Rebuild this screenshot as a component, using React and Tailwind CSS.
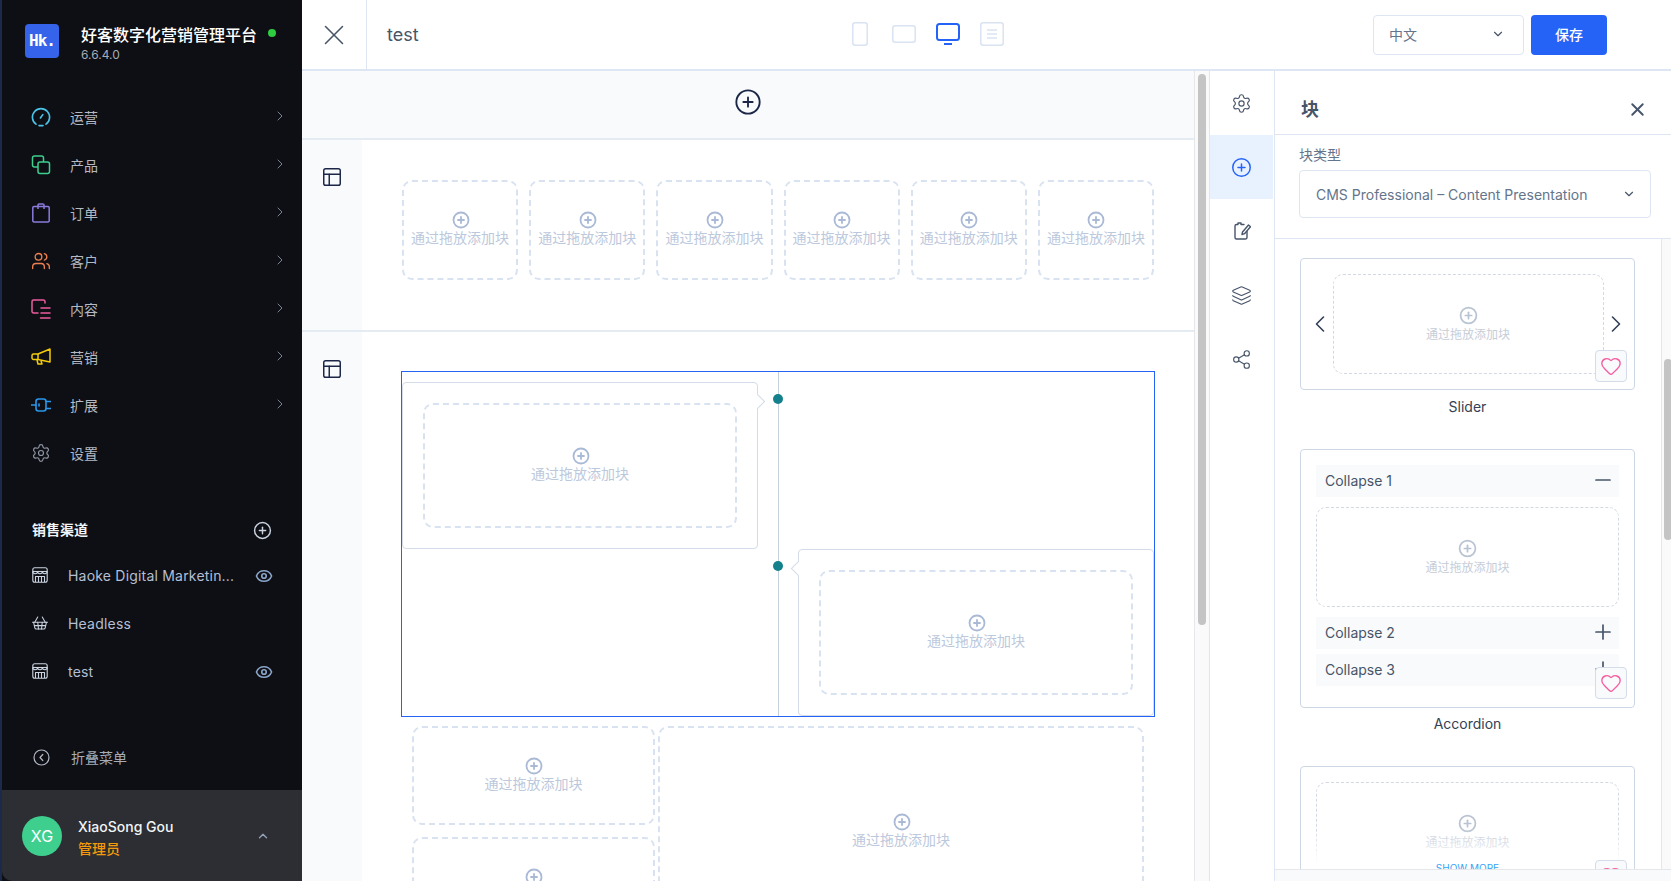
import {
  ChevronDown,
  ChevronLeft,
  ChevronRight,
  ChevronUp,
  CirclePlus,
  Eye,
  Heart,
  Layers,
  Minus,
  PanelsTopLeft,
  Plus,
  Settings,
  Share2,
  ShoppingBasket,
  Users,
  X,
} from "lucide-react";

const font = "font-['Inter','Noto_Sans_CJK_SC',sans-serif]";

const GaugeIcon = () => (
  <svg width="20" height="20" viewBox="0 0 20 20" fill="none" stroke="#4cc3e6" strokeWidth="1.6" strokeLinecap="round">
    <path d="M5 17.2A8.6 8.6 0 1 1 15 17.2" />
    <path d="M8 18.6h4" />
    <path d="M9.4 11l2.4-3.4" />
  </svg>
);

const CopyIcon = () => (
  <svg width="20" height="20" viewBox="0 0 20 20" fill="none" stroke="#3ecf8e" strokeWidth="1.5">
    <rect x="1.5" y="1" width="11" height="11" rx="2" />
    <rect x="7" y="7" width="11.5" height="11.5" rx="2" fill="#0d0f14" />
  </svg>
);

const BagIcon = () => (
  <svg width="20" height="20" viewBox="0 0 20 20" fill="none" stroke="#8b7bdc" strokeWidth="1.5" strokeLinejoin="round">
    <path d="M3 3.5h3.5M13.5 3.5H17a1.2 1.2 0 0 1 1.2 1.2v13A1.2 1.2 0 0 1 17 19H3a1.2 1.2 0 0 1-1.2-1.3v-13A1.2 1.2 0 0 1 3 3.5z" />
    <path d="M7 6V2a1 1 0 0 1 1-1h4a1 1 0 0 1 1 1v4" />
  </svg>
);

const ContentIcon = () => (
  <svg width="20" height="20" viewBox="0 0 20 20" fill="none" stroke="#ec5c9e" strokeWidth="1.5" strokeLinecap="round">
    <path d="M14 4V2.5A1.5 1.5 0 0 0 12.5 1h-10A1.5 1.5 0 0 0 1 2.5v10A1.5 1.5 0 0 0 2.5 14H7" />
    <path d="M10 9h9M10 14h9M9.500 19h9.500" />
  </svg>
);

const HornIcon = () => (
  <svg width="20" height="20" viewBox="0 0 20 20" fill="none" stroke="#f5cc0a" strokeWidth="1.5" strokeLinejoin="round">
    <path d="M19 2v13L7 12.500H2.500A1.500 1.500 0 0 1 1 11V8.500A1.500 1.500 0 0 1 2.500 7H7z" />
    <path d="M7 7v5.500M6 13l1 4h4l-1-3.200" />
  </svg>
);

const PlugIcon = () => (
  <svg width="20" height="20" viewBox="0 0 20 20" fill="none" stroke="#2b97ea" strokeWidth="1.6" strokeLinecap="round">
    <rect x="5" y="4" width="10" height="12" rx="2.500" />
    <path d="M0.500 10H5M15 6.500h4.500M15 13.500h4.500" />
    <path d="M8 9v2" />
  </svg>
);

const StoreIcon = () => (
  <svg width="16" height="16" viewBox="0 0 16 16" fill="none" stroke="currentColor" strokeWidth="1.100" strokeLinejoin="round">
    <rect x="0.800" y="0.800" width="14.400" height="14.400" rx="2" />
    <path d="M0.800 4.500h14.400" />
    <path d="M0.800 4.500c0 1.300 1 2.200 2.400 2.200s2.400-.9 2.400-2.200c0 1.300 1 2.200 2.400 2.200s2.400-.9 2.400-2.200c0 1.300 1 2.200 2.400 2.200s2.400-.9 2.400-2.200" />
    <path d="M3.500 15V9.500h9V15M6.500 9.500V15M9.500 9.500V15" />
  </svg>
);

const menus = [
  { label: "运营", icon: <GaugeIcon /> },
  { label: "产品", icon: <CopyIcon /> },
  { label: "订单", icon: <BagIcon /> },
  { label: "客户", icon: <Users size={20} strokeWidth={1.6} color="#ee7f4f" /> },
  { label: "内容", icon: <ContentIcon /> },
  { label: "营销", icon: <HornIcon /> },
  { label: "扩展", icon: <PlugIcon /> },
  { label: "设置", icon: <Settings size={20} strokeWidth={1.4} color="#8f96a3" />, noArrow: true },
];

const channels = [
  { label: "Haoke Digital Marketin...", icon: <StoreIcon />, eye: true },
  { label: "Headless", icon: <ShoppingBasket size={18} strokeWidth={1.4} className="-ml-[1px]" /> },
  { label: "test", icon: <StoreIcon />, eye: true },
];

const Sidebar = () => (
  <aside className="flex h-full w-[302px] shrink-0 flex-col border-l-2 border-[#1c2a4a] bg-[#0d0f14]">
    <div className="flex h-[90px] shrink-0 items-start pl-[23px] pt-[24px]">
      <div className="flex h-[34px] w-[34px] items-center justify-center rounded-[4px] bg-[#3563e9] font-['DejaVu_Sans_Mono',monospace] text-[16px] font-bold tracking-[-1px] text-white">
        Hk.
      </div>
      <div className="ml-[22px]">
        <div className="flex items-start">
          <span className="text-[16px] leading-[22px] font-medium text-white">好客数字化营销管理平台</span>
          <span className="ml-[11px] mt-[5px] h-2 w-2 rounded-full bg-[#2ecc40]" />
        </div>
        <div className="mt-[1px] text-[12px] leading-[16px] text-[#a5acb8]">6.6.4.0</div>
      </div>
    </div>
    <nav className="shrink-0 pt-[3px]">
      {menus.map((m) => (
        <div key={m.label} className="flex h-[48px] items-center pl-[29px] pr-[14px]">
          <span className="flex w-[39px] items-center">{m.icon}</span>
          <span className="flex-1 text-[14px] text-[#b4b9c4]">{m.label}</span>
          {!m.noArrow && <ChevronRight size={16} strokeWidth={1.300} color="#8f96a3" className="-mt-[3px]" />}
        </div>
      ))}
    </nav>
    <div className="mt-[38px] flex h-[28px] shrink-0 items-center justify-between pl-[30px] pr-[30px]">
      <span className="text-[14px] font-semibold text-[#f1f5f9]">销售渠道</span>
      <CirclePlus size={19} strokeWidth={1.800} color="#cbd5e1" className="mt-[2px]" />
    </div>
    <div className="mt-[8px] shrink-0">
      {channels.map((c) => (
        <div key={c.label} className="flex h-[48px] items-center pl-[30px] pr-[29px] text-[#cbd5e1]">
          <span className="flex w-[36px]">{c.icon}</span>
          <span className="flex-1 text-[14px] tracking-[0.2px] text-[#b4bfd3]">{c.label}</span>
          {c.eye && <Eye size={18} strokeWidth={2.200} color="#8aa3c7" className="mt-[1px]" />}
        </div>
      ))}
    </div>
    <div className="mt-[38px] flex h-[48px] shrink-0 items-center pl-[31px]">
      <svg width="17" height="17" viewBox="0 0 17 17" fill="none" stroke="#b4bac6" strokeWidth="1.200" strokeLinecap="round" strokeLinejoin="round">
        <circle cx="8.500" cy="8.500" r="7.500" />
        <path d="M9.800 5.500L7 8.500l2.800 3" />
      </svg>
      <span className="ml-[21px] text-[14px] text-[#a5acb8]">折叠菜单</span>
    </div>
    <div className="mt-auto flex h-[91px] shrink-0 items-center rounded-bl-[10px] bg-[#2d2e33] pl-[20px] pr-[32px]">
      <div className="flex h-10 w-10 items-center justify-center rounded-full bg-[#3ecf8e] text-[16px] text-white">XG</div>
      <div className="ml-[16px] flex-1 pt-[4px]">
        <div className="text-[14px] leading-[22px] font-medium text-[#f1f5f9]">XiaoSong Gou</div>
        <div className="text-[14px] leading-[22px] font-medium text-[#f59a0c]">管理员</div>
      </div>
      <ChevronUp size={14} strokeWidth={2.200} color="#94a3b8" />
    </div>
  </aside>
);

const Phone = () => (
  <svg width="16" height="24" viewBox="0 0 16 24" fill="none" stroke="#d9e3f2" strokeWidth="1.500">
    <rect x="0.750" y="0.750" width="14.500" height="22.500" rx="2.500" />
  </svg>
);

const Tablet = () => (
  <svg width="24" height="18" viewBox="0 0 24 18" fill="none" stroke="#d9e3f2" strokeWidth="1.500">
    <rect x="0.750" y="0.750" width="22.500" height="16.500" rx="2.500" />
  </svg>
);

const Desktop = () => (
  <svg width="24" height="22" viewBox="0 0 24 22" fill="none" stroke="#2463f6" strokeWidth="2">
    <rect x="1" y="1" width="22" height="16" rx="2.500" />
    <path d="M8 21h8" />
  </svg>
);

const ListDoc = () => (
  <svg width="24" height="24" viewBox="0 0 24 24" fill="none" stroke="#d9e3f2" strokeWidth="1.500">
    <rect x="0.750" y="0.750" width="22.500" height="22.500" rx="2.500" />
    <path d="M7 8h10M7 12h10M7 16h10" />
  </svg>
);

const Header = () => (
  <header className="flex h-[71px] shrink-0 items-center border-b-2 border-[#dde6f2] bg-white">
    <div className="flex h-full w-[65px] shrink-0 items-center justify-center border-r border-[#dde6f2]">
      <X size={34} strokeWidth={1.100} color="#475569" />
    </div>
    <div className="w-[481px] shrink-0 pl-[20px] text-[18px] text-[#475569]">test</div>
    <div className="-mt-[1px] flex w-[156px] shrink-0 items-center gap-[20px]">
      <span className="flex w-[24px] justify-center"><Phone /></span>
      <span className="flex w-[24px] justify-center"><Tablet /></span>
      <span className="flex w-[24px] justify-center"><Desktop /></span>
      <span className="flex w-[24px] justify-center"><ListDoc /></span>
    </div>
    <div className="ml-[369px] flex h-[40px] w-[151px] shrink-0 items-center justify-between rounded-[4px] border border-[#dde6f2] pb-[1px] pl-[15px] pr-[18px] text-[14px] text-[#64748b]">
      中文
      <ChevronDown size={14} strokeWidth={2} color="#475569" />
    </div>
    <button className="ml-[7px] h-[40px] w-[76px] shrink-0 rounded-[4px] bg-[#2463f6] pb-[1px] text-[14px] font-medium text-white">保存</button>
  </header>
);

const Slot = ({ className = "" }) => (
  <div className={`flex flex-col items-center justify-center rounded-[10px] border-2 border-dashed border-[#d8e2f0] ${className}`}>
    <CirclePlus size={18} strokeWidth={2.400} color="#a9b9d6" className="-my-[1px] ml-[1px]" />
    <span className="text-[14px] leading-[20px] whitespace-nowrap text-[#bcc8dc]">通过拖放添加块</span>
  </div>
);

const Bubble = ({ side, className = "" }) => (
  <div className={`relative flex rounded-[4px] border border-[#d3dce8] bg-white ${className}`}>
    <span
      className={
        side === "left"
          ? "absolute right-[-6px] top-[13px] h-[11px] w-[11px] rotate-45 border-r border-t border-[#d3dce8] bg-white"
          : "absolute left-[-6px] top-[13px] h-[11px] w-[11px] rotate-45 border-b border-l border-[#d3dce8] bg-white"
      }
    />
    <Slot className="m-[20px] flex-1" />
  </div>
);

const Canvas = () => (
  <div className="flex h-full w-[892px] shrink-0 flex-col overflow-hidden bg-white">
    <div className="flex h-[69px] shrink-0 items-center justify-center border-b-2 border-[#e5ebf3] bg-[#f8fafc] pb-[5px]">
      <CirclePlus size={28} strokeWidth={1.600} color="#1c2747" />
    </div>
    <div className="flex h-[192px] shrink-0 border-b-2 border-[#e5ebf3]">
      <div className="flex w-[60px] shrink-0 justify-center bg-[#f8fafc] pt-[26px]">
        <PanelsTopLeft size={22} strokeWidth={1.600} color="#1c2747" />
      </div>
      <div className="flex flex-1 items-start gap-[11px] px-[40px] pt-[40px]">
        {[1, 2, 3, 4, 5, 6].map((i) => (
          <Slot key={i} className="h-[100px] flex-1" />
        ))}
      </div>
    </div>
    <div className="flex min-h-0 flex-1">
      <div className="flex w-[60px] shrink-0 justify-center bg-[#f8fafc] pt-[26px]">
        <PanelsTopLeft size={22} strokeWidth={1.600} color="#1c2747" />
      </div>
      <div className="flex-1 pl-[39px] pt-[39px]">
        <div className="relative grid h-[346px] w-[754px] grid-cols-[376px_1px_1fr] border border-[#2463f6]">
          <div className="pt-[10px]">
            <Bubble side="left" className="h-[167px] w-[356px]" />
          </div>
          <div className="bg-[#c4d0dc]" />
          <div className="pl-[19px] pt-[177px]">
            <Bubble side="right" className="h-[167px]" />
          </div>
          <span className="absolute left-[371px] top-[22px] h-[10px] w-[10px] rounded-full bg-[#14808c]" />
          <span className="absolute left-[371px] top-[189px] h-[10px] w-[10px] rounded-full bg-[#14808c]" />
        </div>
        <div className="flex gap-[3px] pl-[11px] pt-[9px]">
          <div className="flex w-[243px] shrink-0 flex-col gap-[12px]">
            <Slot className="h-[99px]" />
            <Slot className="h-[99px]" />
          </div>
          <Slot className="h-[211px] w-[486px]" />
        </div>
      </div>
    </div>
  </div>
);

const Rail = () => (
  <div className="flex h-full w-[66px] shrink-0 flex-col border-x border-[#dde6f2] bg-white pr-[1px] text-[#475569]">
    <div className="flex h-[64px] items-center justify-center">
      <Settings size={21} strokeWidth={1.300} />
    </div>
    <div className="flex h-[64px] items-center justify-center bg-[#e8f2ff]">
      <CirclePlus size={21} strokeWidth={1.700} color="#2463f6" />
    </div>
    <div className="flex h-[64px] items-center justify-center">
      <svg width="18" height="18" viewBox="0 0 18 18" fill="none" stroke="currentColor" strokeWidth="1.400" strokeLinecap="round" strokeLinejoin="round">
        <path d="M14 9.500V15.500A1.500 1.500 0 0 1 12.500 17h-9A1.500 1.500 0 0 1 2 15.500V4A1.500 1.500 0 0 1 3.500 2.500H5V1h3v1.500h3" />
        <path d="M9 12.500l.5-2.500 6-7 2 1.700-6 7z" />
      </svg>
    </div>
    <div className="flex h-[64px] items-center justify-center">
      <Layers size={21} strokeWidth={1.300} />
    </div>
    <div className="flex h-[64px] items-center justify-center">
      <Share2 size={21} strokeWidth={1.300} />
    </div>
  </div>
);

const HeartBtn = ({ className = "" }) => (
  <div className={`absolute right-[7px] flex h-[32px] w-[32px] items-center justify-center rounded-[4px] border border-[#d3dce8] bg-[#f8fafc] ${className}`}>
    <Heart size={22} strokeWidth={1.500} color="#f45fa0" />
  </div>
);

const PanelSlot = ({ className = "" }) => (
  <div className={`flex flex-col items-center justify-center rounded-[10px] border border-dashed border-[#d3d9e2] bg-white pt-[2px] ${className}`}>
    <CirclePlus size={19} strokeWidth={2.200} color="#b9c3d2" />
    <span className="text-[12px] leading-[20px] whitespace-nowrap text-[#c6cdd8]">通过拖放添加块</span>
  </div>
);

const Row = ({ label, icon, className = "" }) => (
  <div className={`flex h-[32px] items-center justify-between bg-[#f9fafb] pb-[1px] pl-[9px] pr-[4px] text-[14px] text-[#475569] ${className}`}>
    {label}
    {icon}
  </div>
);

const Panel = () => (
  <div className="flex h-full min-w-0 flex-1 flex-col bg-white">
    <div className="flex h-[64px] shrink-0 items-center justify-between border-b border-[#dde6f2] pl-[26px] pr-[23px] pt-[13px]">
      <span className="text-[18px] font-semibold text-[#475569]">块</span>
      <X size={21} strokeWidth={2.200} color="#475569" />
    </div>
    <div className="h-[104px] shrink-0 border-b border-[#dde6f2] pl-[24px] pr-[20px] pt-[9px]">
      <div className="text-[14px] leading-[22px] text-[#64748b]">块类型</div>
      <div className="mt-[4px] flex h-[48px] items-center justify-between rounded-[4px] border border-[#dde6f2] pl-[16px] pr-[14px] text-[14px] text-[#64748b]">
        CMS Professional – Content Presentation
        <ChevronDown size={14} strokeWidth={2} color="#475569" />
      </div>
    </div>
    <div className="flex min-h-0 flex-1">
      <div className="min-w-0 flex-1 overflow-hidden pl-[25px] pr-[26px] pt-[19px]">
        <div className="relative flex h-[132px] items-center justify-center rounded-[4px] border border-[#cdd8e4]">
          <ChevronLeft size={28} strokeWidth={1.400} color="#334155" className="mr-[-1px]" />
          <PanelSlot className="h-[100px] w-[271px]" />
          <ChevronRight size={28} strokeWidth={1.400} color="#334155" className="ml-[-2px]" />
          <HeartBtn className="top-[91px]" />
        </div>
        <div className="pt-[6px] text-center text-[14px] leading-[22px] text-[#334155]">Slider</div>
        <div className="relative mt-[31px] h-[259px] rounded-[4px] border border-[#cdd8e4] px-[15px] pt-[15px]">
          <Row label="Collapse 1" icon={<Minus size={24} strokeWidth={1.700} className="-mt-[2px]" />} />
          <PanelSlot className="mt-[10px] h-[100px]" />
          <Row label="Collapse 2" icon={<Plus size={24} strokeWidth={1.700} className="-mt-[2px]" />} className="mt-[10px]" />
          <Row label="Collapse 3" icon={<Plus size={24} strokeWidth={1.700} className="-mt-[2px]" />} className="mt-[5px]" />
          <HeartBtn className="top-[217px]" />
        </div>
        <div className="pt-[5px] text-center text-[14px] leading-[22px] text-[#334155]">Accordion</div>
        <div className="relative mt-[31px] h-[200px] rounded-[4px] border border-[#cdd8e4] px-[15px] pt-[15px]">
          <PanelSlot className="h-[100px]" />
          <div className="absolute inset-x-0 top-[60px] h-[38px] bg-gradient-to-b from-transparent to-white" />
          <div className="absolute inset-x-0 top-[98px] h-[40px] bg-white" />
          <div className="absolute inset-x-0 top-[93px] text-center text-[10px] leading-[16px] text-[#38a3f5]">SHOW MORE</div>
          <HeartBtn className="top-[93px]" />
        </div>
      </div>
      <div className="h-full w-[10px] shrink-0 border-l border-[#e5e7eb] bg-[#fafafa] pl-[2px] pt-[120px]">
        <div className="h-[181px] w-[8px] rounded-[4px] bg-[#c4c4c4]" />
      </div>
    </div>
    <div className="h-[12px] shrink-0 border-t border-[#e5e7eb] bg-[#f9fafb]" />
  </div>
);

const App = () => {
  return (
    <div className={`flex h-screen w-full overflow-hidden bg-white ${font}`}>
      <Sidebar />
      <main className="flex min-w-0 flex-1 flex-col">
        <Header />
        <div className="flex min-h-0 flex-1">
          <Canvas />
          <div className="h-full w-[15px] shrink-0 border-l border-[#e5e7eb] bg-[#fafafa] pl-[3px] pt-[3px]">
            <div className="h-[551px] w-[8px] rounded-[4px] bg-[#c4c4c4]" />
          </div>
          <Rail />
          <Panel />
        </div>
      </main>
    </div>
  );
};

export default App;
